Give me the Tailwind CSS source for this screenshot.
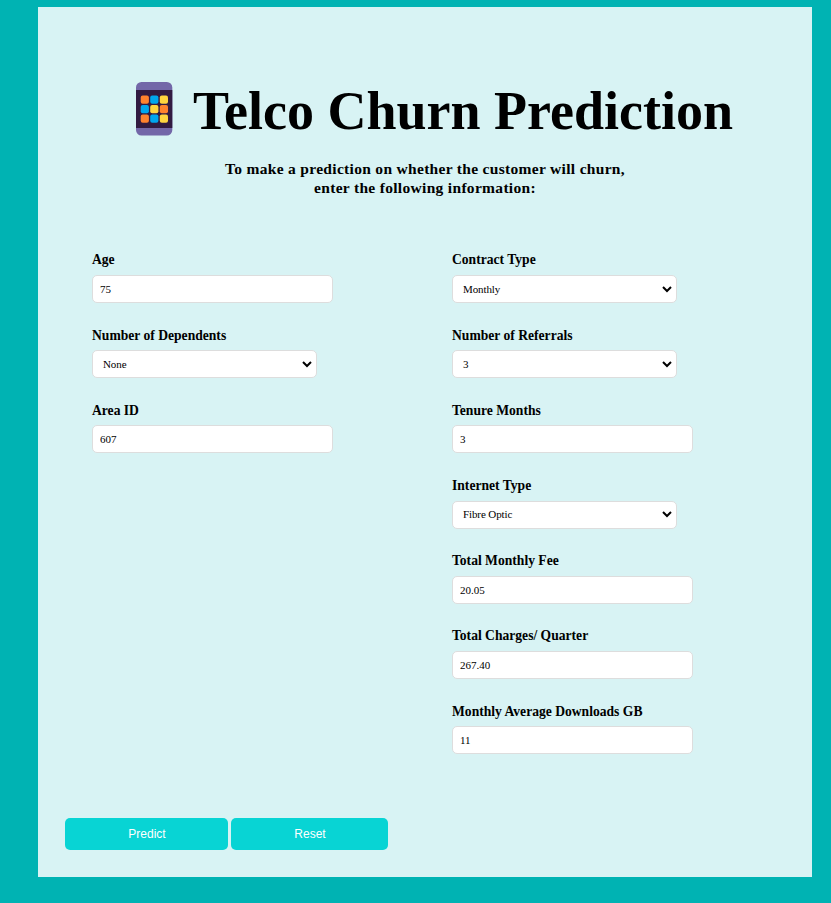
<!DOCTYPE html>
<html lang="en">
<head>
<meta charset="utf-8">
<title>Telco Churn Prediction</title>
<script src="https://cdn.jsdelivr.net/npm/@tailwindcss/browser@4"></script>
</head>
<body class="bg-[#00b3b3] h-[903px] overflow-hidden pt-[7px] pl-[38px] font-['Liberation_Serif',serif] text-black">
<main class="w-[774px] h-[870px] bg-[#d8f3f4] flex flex-col">
  <header class="pt-[72px]">
    <h1 class="flex items-center pl-[98px] h-[62px] text-[54px] leading-[62px] font-bold whitespace-nowrap">
      <svg class="w-[37px] h-[54px] mr-[20px] mt-[-2px] shrink-0" viewBox="0 0 37 54">
        <rect width="36.3" height="53.5" rx="5.5" fill="#7367a8"/>
        <rect y="8" width="36.3" height="38" fill="#321b41"/>
        <g fill="#ff822d"><rect x="4.7" y="13.5" width="8.2" height="8.2" rx="2"/><rect x="23.8" y="23" width="8.2" height="8.2" rx="2"/><rect x="4.7" y="32.5" width="8.2" height="8.2" rx="2"/></g>
        <g fill="#00a6ed"><rect x="14.2" y="13.5" width="8.2" height="8.2" rx="2"/><rect x="4.7" y="23" width="8.2" height="8.2" rx="2"/><rect x="14.2" y="32.5" width="8.2" height="8.2" rx="2"/></g>
        <g fill="#ffd53e"><rect x="23.8" y="13.5" width="8.2" height="8.2" rx="2"/><rect x="14.2" y="23" width="8.2" height="8.2" rx="2"/><rect x="23.8" y="32.5" width="8.2" height="8.2" rx="2"/></g>
      </svg>
      <span class="pt-[2px]">Telco Churn Prediction</span>
    </h1>
    <p class="mt-[18px] text-center text-[15.5px] leading-[19px] font-bold tracking-[0.31px]">To make a prediction on whether the customer will churn,<br>enter the following information:</p>
  </header>
  <form class="flex flex-col grow">
    <div class="flex mt-[54px] pl-[54px] h-[558px]">
      <div class="w-[360px]">
        <div class="h-[75.2px]"><label class="block h-[24px] pt-[0.4px] leading-[18px] text-[13.6px] font-bold">Age</label><input class="block w-[241px] h-[28px] rounded-[5px] border border-[#ddd] bg-white px-[7px] text-[11px]" value="75"></div>
        <div class="h-[75.2px]"><label class="block h-[24px] pt-[0.4px] leading-[18px] text-[13.6px] font-bold">Number of Dependents</label><div class="flex items-center justify-between w-[225px] h-[28px] rounded-[5px] border border-[#ddd] bg-white pl-[10px] pr-[4px] text-[11px] tracking-[-0.1px]"><span>None</span><svg class="w-[10px] h-[7px]" viewBox="0 0 10 7"><path d="M1 1l4 4 4-4" fill="none" stroke="#000" stroke-width="2"/></svg></div></div>
        <div class="h-[75.2px]"><label class="block h-[24px] pt-[0.4px] leading-[18px] text-[13.6px] font-bold">Area ID</label><input class="block w-[241px] h-[28px] rounded-[5px] border border-[#ddd] bg-white px-[7px] text-[11px]" value="607"></div>
      </div>
      <div class="w-[300px]">
        <div class="h-[75.2px]"><label class="block h-[24px] pt-[0.4px] leading-[18px] text-[13.6px] font-bold">Contract Type</label><div class="flex items-center justify-between w-[225px] h-[28px] rounded-[5px] border border-[#ddd] bg-white pl-[10px] pr-[4px] text-[11px] tracking-[-0.1px]"><span>Monthly</span><svg class="w-[10px] h-[7px]" viewBox="0 0 10 7"><path d="M1 1l4 4 4-4" fill="none" stroke="#000" stroke-width="2"/></svg></div></div>
        <div class="h-[75.2px]"><label class="block h-[24px] pt-[0.4px] leading-[18px] text-[13.6px] font-bold">Number of Referrals</label><div class="flex items-center justify-between w-[225px] h-[28px] rounded-[5px] border border-[#ddd] bg-white pl-[10px] pr-[4px] text-[11px] tracking-[-0.1px]"><span>3</span><svg class="w-[10px] h-[7px]" viewBox="0 0 10 7"><path d="M1 1l4 4 4-4" fill="none" stroke="#000" stroke-width="2"/></svg></div></div>
        <div class="h-[75.2px]"><label class="block h-[24px] pt-[0.4px] leading-[18px] text-[13.6px] font-bold">Tenure Months</label><input class="block w-[241px] h-[28px] rounded-[5px] border border-[#ddd] bg-white px-[7px] text-[11px]" value="3"></div>
        <div class="h-[75.2px]"><label class="block h-[24px] pt-[0.4px] leading-[18px] text-[13.6px] font-bold">Internet Type</label><div class="flex items-center justify-between w-[225px] h-[28px] rounded-[5px] border border-[#ddd] bg-white pl-[10px] pr-[4px] text-[11px] tracking-[-0.1px]"><span>Fibre Optic</span><svg class="w-[10px] h-[7px]" viewBox="0 0 10 7"><path d="M1 1l4 4 4-4" fill="none" stroke="#000" stroke-width="2"/></svg></div></div>
        <div class="h-[75.2px]"><label class="block h-[24px] pt-[0.4px] leading-[18px] text-[13.6px] font-bold">Total Monthly Fee</label><input class="block w-[241px] h-[28px] rounded-[5px] border border-[#ddd] bg-white px-[7px] text-[11px]" value="20.05"></div>
        <div class="h-[75.2px]"><label class="block h-[24px] pt-[0.4px] leading-[18px] text-[13.6px] font-bold">Total Charges/ Quarter</label><input class="block w-[241px] h-[28px] rounded-[5px] border border-[#ddd] bg-white px-[7px] text-[11px]" value="267.40"></div>
        <div class="h-[75.2px]"><label class="block h-[24px] pt-[0.4px] leading-[18px] text-[13.6px] font-bold">Monthly Average Downloads GB</label><input class="block w-[241px] h-[28px] rounded-[5px] border border-[#ddd] bg-white px-[7px] text-[11px]" value="11"></div>
      </div>
    </div>
    <div class="flex gap-[3px] pl-[27px] mt-[9px] font-['Liberation_Sans',Arial,sans-serif] text-[12px] text-white">
      <button type="button" class="w-[163px] h-[32px] rounded-[5px] bg-[#08d4d4] pl-[1px]">Predict</button>
      <button type="button" class="w-[157px] h-[32px] rounded-[5px] bg-[#08d4d4] pl-[1px]">Reset</button>
    </div>
  </form>
</main>
</body>
</html>
